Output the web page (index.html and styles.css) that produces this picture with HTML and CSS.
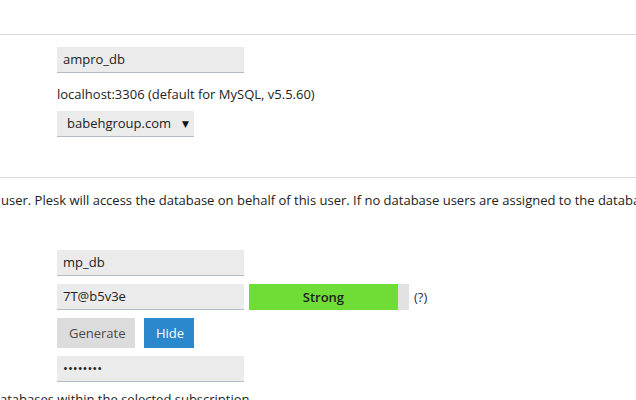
FILE: index.html
```html
<!DOCTYPE html>
<html>
<head>
<meta charset="utf-8">
<link rel="stylesheet" href="styles.css">
</head>
<body>
<div class="page">
  <div class="top-space"></div>
  <hr class="sep">
  <div class="fields fields-db">
    <div class="input">ampro_db</div>
    <div class="static">localhost:3306 (default for MySQL, v5.5.60)</div>
    <div class="select"><span>babehgroup.com</span><span class="arrow">▼</span></div>
  </div>
  <hr class="sep sep-2">
  <p class="hint">user. Plesk will access the database on behalf of this user. If no database users are assigned to the database, Plesk will use the default user.</p>
  <div class="fields fields-user">
    <div class="input">mp_db</div>
    <div class="row">
      <div class="input">7T@b5v3e</div>
      <div class="strength"><div class="strength-fill" style="width:93%">Strong</div></div>
      <span class="help">(?)</span>
    </div>
    <div class="buttons">
      <button class="btn btn-gray">Generate</button>
      <button class="btn btn-blue">Hide</button>
    </div>
    <div class="input input-dots">••••••••</div>
  </div>
  <p class="hint hint-bottom">databases within the selected subscription</p>
</div>
</body>
</html>
```
FILE: styles.css
```css
html, body {
  margin: 0;
  padding: 0;
  background: #fff;
  overflow: hidden;
}
body {
  font-family: "Open Sans", "DejaVu Sans", sans-serif;
  font-size: 13px;
  color: #222;
  width: 636px;
  height: 400px;
}
.page {
  white-space: nowrap;
  overflow: hidden;
}
.top-space {
  height: 34px;
}
.sep {
  margin: 0;
  border: 0;
  border-top: 1px solid #dcdcdc;
  height: 0;
}
.fields {
  padding-left: 57px;
  display: flex;
  flex-direction: column;
  align-items: flex-start;
}
.fields-db {
  padding-top: 12px;
}
.input {
  box-sizing: border-box;
  width: 187px;
  height: 26px;
  background: #ebebeb;
  border-bottom: 1px solid #b3bcc6;
  padding: 0 6px;
  line-height: 25px;
  color: #222;
}
.static {
  margin-top: 12px;
  line-height: 18px;
  height: 18px;
}
.select {
  margin-top: 8px;
  box-sizing: border-box;
  width: 137px;
  height: 26px;
  background: #ebebeb;
  border-bottom: 1px solid #b3bcc6;
  padding: 0 5px 0 10px;
  line-height: 25px;
  display: flex;
  justify-content: space-between;
}
.arrow {
  font-size: 9px;
  color: #111;
}
.sep-2 {
  margin-top: 40px;
}
.hint {
  margin: 13px 0 0 1px;
  line-height: 18px;
}
.fields-user {
  padding-top: 41px;
}
.row {
  margin-top: 8px;
  display: flex;
  align-items: center;
}
.strength {
  margin-left: 5px;
  width: 160px;
  height: 26px;
  background: #e2e2e2;
}
.strength-fill {
  height: 100%;
  background: #6fdd36;
  text-align: center;
  line-height: 26px;
  font-weight: 600;
  color: #1d1d1d;
}
.help {
  margin-left: 5px;
  color: #23324a;
}
.buttons {
  margin-top: 8px;
  display: flex;
  gap: 9px;
}
.btn {
  font-family: inherit;
  font-size: 13px;
  border: 0;
  height: 30px;
  padding: 0 12px;
  border-radius: 0;
}
.btn-gray {
  background: #dcdcdc;
  color: #4a4a4a;
  width: 78px;
}
.btn-blue {
  background: #2b88cc;
  color: #fff;
  width: 50px;
}
.input-dots {
  margin-top: 8px;
  font-size: 13px;
}
.hint-bottom {
  margin: 8px 0 0 0;
  text-indent: -8px;
}
```
